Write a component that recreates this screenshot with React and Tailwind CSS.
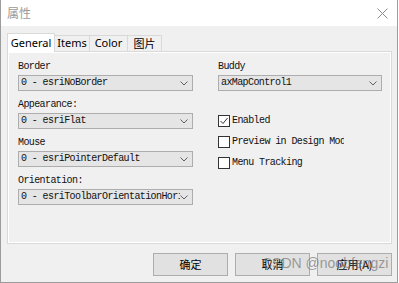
import React from 'react';

const mono = { fontFamily: '"Liberation Mono", "DejaVu Sans Mono", monospace' };
const ui = { fontFamily: '"Noto Sans", "Noto Sans CJK SC", sans-serif' };

// small chevron used at the right of each combo box
const Chevron = () => (
  <svg width="8" height="5" viewBox="0 0 8 5" className="shrink-0">
    <path d="M0.5 0.5 L4 4 L7.5 0.5" fill="none" stroke="#606060" strokeWidth="1" />
  </svg>
);

const Combo = ({ value, width }) => (
  <div
    className={`h-[16px] ${width} bg-[#e5e5e5] border border-[#adadad] flex items-center pl-[2px] pr-[4px]`}
  >
    <div className="flex-1 overflow-hidden whitespace-nowrap text-[10px] leading-[14px] tracking-[-0.6px] text-[#111]" style={mono}>
      {value}
    </div>
    <Chevron />
  </div>
);

const Field = ({ label, value, width }) => (
  <div className="flex flex-col h-[30px]">
    <div className="h-[12px] text-[10px] leading-[12px] tracking-[-0.6px] text-[#111] mb-[2px]" style={mono}>{label}</div>
    <Combo value={value} width={width} />
  </div>
);

const Check = ({ label, checked }) => (
  <div className="h-[21px] flex items-center">
    <div className="w-[12px] h-[12px] border border-[#333] bg-white flex items-center justify-center shrink-0">
      {checked && (
        <svg width="10" height="10" viewBox="0 0 10 10">
          <path d="M1.5 5 L4 7.5 L8.5 2" fill="none" stroke="#333" strokeWidth="1" />
        </svg>
      )}
    </div>
    <div className="ml-[2px] w-[112px] overflow-hidden whitespace-nowrap text-[10px] leading-[12px] tracking-[-0.6px] text-[#111]" style={mono}>
      {label}
    </div>
  </div>
);

const tabs = [
  { name: 'General', w: 'w-[48px]', active: true },
  { name: 'Items', w: 'w-[36px]' },
  { name: 'Color', w: 'w-[39px]' },
  { name: '图片', w: 'w-[35px]' },
];

export default function App() {
  return (
    <div className="relative w-[398px] h-[283px] bg-[#f0f0f0] border-l border-r border-b border-[#9c9c9c] flex flex-col" style={ui}>
      {/* title bar */}
      <div className="h-[26px] bg-white flex items-center justify-between pl-[6px] pr-[9px] shrink-0">
        <span className="text-[12px] text-[#9a9a9a]" style={{ fontFamily: '"Noto Sans CJK SC", sans-serif' }}>属性</span>
        <svg width="11" height="11" viewBox="0 0 11 11">
          <path d="M0.5 0.5 L10.5 10.5 M10.5 0.5 L0.5 10.5" stroke="#8a8a8a" strokeWidth="1" />
        </svg>
      </div>

      <div className="flex flex-col pl-[6px] pt-[7px]">
        {/* tabs */}
        <div className="flex items-end h-[18px]">
          {tabs.map((t, i) => (
            <div
              key={t.name}
              className={`${t.w} ${i > 0 ? '-ml-px' : ''} flex items-center justify-center border-l border-t border-r border-[#d9d9d9] text-[11px] text-black ${
                t.active ? 'h-[19px] bg-white relative z-10 -mb-px' : 'h-[16px] bg-[#f0f0f0]'
              }`}
              style={t.name === '图片' ? { fontFamily: '"Noto Sans CJK SC", sans-serif' } : undefined}
            >
              {t.name}
            </div>
          ))}
        </div>

        {/* panel */}
        <div className="w-[385px] h-[193px] border border-[#d9d9d9] shadow-[inset_1px_1px_0_#fff,inset_-1px_-1px_0_#fff] bg-[#f0f0f0] flex pl-[10px] pt-[9px]">
          <div className="w-[175px] flex flex-col gap-[8px]">
            <Field label="Border" value="0 - esriNoBorder" width="w-[175px]" />
            <Field label="Appearance:" value="0 - esriFlat" width="w-[175px]" />
            <Field label="Mouse" value="0 - esriPointerDefault" width="w-[175px]" />
            <Field label="Orientation:" value="0 - esriToolbarOrientationHorizontal" width="w-[175px]" />
          </div>
          <div className="ml-[25px] w-[164px] flex flex-col">
            <Field label="Buddy" value="axMapControl1" width="w-[164px]" />
            <div className="mt-[19px] flex flex-col">
              <Check label="Enabled" checked />
              <Check label="Preview in Design Mode" />
              <Check label="Menu Tracking" />
            </div>
          </div>
        </div>

        {/* buttons */}
        <div className="mt-[9px] flex justify-end gap-[7px] pr-[5px]">
          {['确定', '取消', '应用(A)'].map((b) => (
            <div
              key={b}
              className="w-[75px] h-[23px] bg-[#e1e1e1] border border-[#adadad] flex items-center justify-center text-[11px] text-black"
              style={{ fontFamily: '"Noto Sans CJK SC", sans-serif' }}
            >
              {b}
            </div>
          ))}
        </div>
      </div>

      {/* watermark */}
      <div
        className="absolute left-[261px] top-[254px] text-[14px] leading-[18px] text-[rgba(100,100,100,0.6)] whitespace-nowrap pointer-events-none"
        style={{ fontFamily: '"Liberation Sans", sans-serif' }}
      >
        CSDN @noobfengzi
      </div>
    </div>
  );
}
